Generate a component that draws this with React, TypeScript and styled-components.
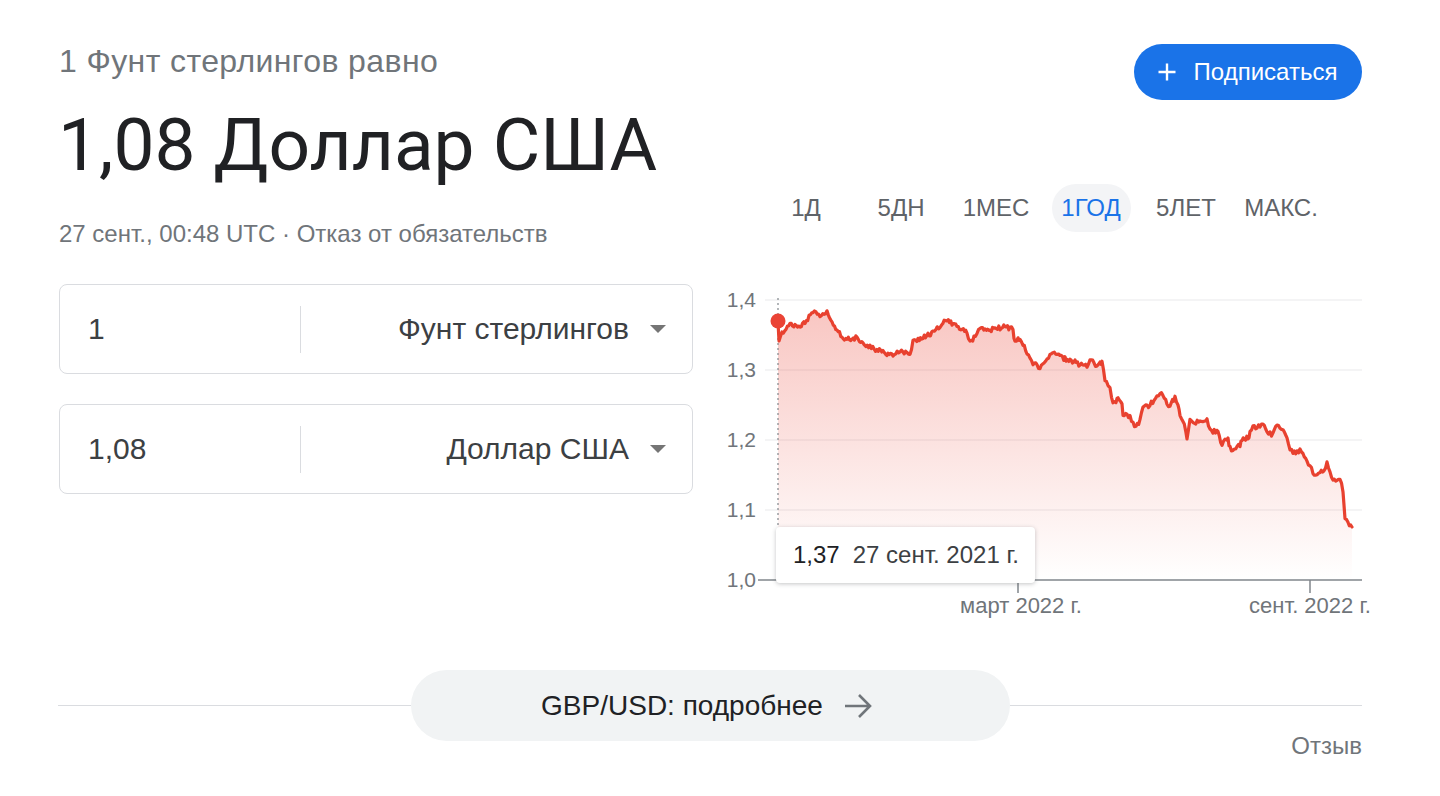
import React from "react";
import styled, { createGlobalStyle } from "styled-components";

const GlobalStyle = createGlobalStyle`
  html, body { margin: 0; padding: 0; background: #ffffff; }
  body { font-family: "Liberation Sans", Arial, sans-serif; color: #202124; }
  * { box-sizing: border-box; }
`;

const Page = styled.div`
  width: 1440px;
  height: 796px;
  padding: 44px 78px 0 58px;
  display: flex;
  flex-direction: column;
  overflow: hidden;
`;

const Top = styled.div`
  display: grid;
  grid-template-columns: 635px 647px;
  column-gap: 22px;
`;

const LeftCol = styled.div`
  display: flex;
  flex-direction: column;
`;

const RightCol = styled.div`
  display: flex;
  flex-direction: column;
`;

const Label = styled.div`
  font-size: 32px;
  line-height: 34px;
  letter-spacing: 0.4px;
  color: #70757a;
  padding-left: 1px;
  white-space: nowrap;
`;

const Title = styled.div`
  margin-top: 24px;
  font-family: Roboto, "Liberation Sans", sans-serif;
  font-size: 73px;
  line-height: 86px;
  color: #202124;
  white-space: nowrap;
`;

const Meta = styled.div`
  margin-top: 32px;
  font-size: 24px;
  line-height: 28px;
  color: #70757a;
  padding-left: 1px;
  white-space: nowrap;
`;

const Boxes = styled.div`
  margin-top: 36px;
  display: flex;
  flex-direction: column;
  gap: 30px;
`;

const Box = styled.div`
  height: 90px;
  border: 1px solid #dadce0;
  border-radius: 8px;
  display: flex;
  align-items: center;
  margin-left: 1px;
`;

const Amount = styled.div`
  width: 240px;
  padding-left: 28px;
  font-size: 30px;
  color: #3c4043;
`;

const Divider = styled.div`
  width: 1px;
  height: 47px;
  background: #dadce0;
`;

const CurrencySelect = styled.div`
  flex: 1;
  display: flex;
  justify-content: flex-end;
  align-items: center;
  gap: 21px;
  padding-right: 26px;
  font-size: 30px;
  color: #3c4043;
  white-space: nowrap;
`;

const Caret = styled.span`
  width: 0;
  height: 0;
  border-left: 8px solid transparent;
  border-right: 8px solid transparent;
  border-top: 8px solid #757575;
`;

const ButtonRow = styled.div`
  display: flex;
  justify-content: flex-end;
`;

const SubscribeButton = styled.button`
  width: 228px;
  height: 56px;
  border: none;
  border-radius: 28px;
  background: #1a73e8;
  color: #ffffff;
  font-family: "Liberation Sans", Arial, sans-serif;
  font-size: 24px;
  display: flex;
  align-items: center;
  justify-content: center;
  gap: 17px;
  padding: 0 2px 0 0;
  cursor: pointer;
`;

const Tabs = styled.div`
  margin-top: 84px;
  display: flex;
  justify-content: center;
  gap: 16px;
  padding-left: 10px;
`;

const Tab = styled.div<{ $active?: boolean }>`
  width: 79px;
  height: 48px;
  border-radius: 24px;
  display: flex;
  align-items: center;
  justify-content: center;
  font-size: 24px;
  color: ${(p) => (p.$active ? "#1a73e8" : "#5f6368")};
  background: ${(p) => (p.$active ? "#f3f4f6" : "transparent")};
  white-space: nowrap;
`;

const ChartWrap = styled.div`
  margin-top: 53px;
  height: 340px;
  position: relative;
`;

const ChartSvg = styled.svg`
  display: block;
  overflow: visible;
`;

const Tooltip = styled.div`
  position: absolute;
  left: 61px;
  top: 242px;
  height: 56px;
  padding: 0 16px 0 17px;
  background: #ffffff;
  border-radius: 4px;
  box-shadow: 0 1px 4px rgba(60, 64, 67, 0.3);
  display: flex;
  align-items: center;
  gap: 13px;
  font-size: 24px;
  white-space: nowrap;
`;

const TipValue = styled.span`
  color: #202124;
`;

const TipDate = styled.span`
  color: #3c4043;
`;

const Bottom = styled.div`
  margin-top: 45px;
  display: flex;
  align-items: center;
`;

const Rule = styled.div`
  flex: 1;
  height: 1px;
  background: #dadce0;
`;

const MoreButton = styled.div`
  width: 599px;
  height: 71px;
  border-radius: 36px;
  background: #f1f3f4;
  display: flex;
  align-items: center;
  justify-content: center;
  gap: 20px;
  font-size: 28px;
  color: #202124;
  padding-right: 6px;
  white-space: nowrap;
`;

const Feedback = styled.div`
  margin-top: -9px;
  align-self: flex-end;
  font-size: 24px;
  line-height: 28px;
  color: #70757a;
`;

const keys: [number, number][] = [
  [778, 322], [779, 341], [782, 333], [790, 325], [800, 328], [805, 322], [813, 312], [820, 316],
  [827, 313], [832, 322], [837, 330], [842, 336], [847, 340], [852, 338], [857, 338], [863, 343],
  [870, 347], [877, 350], [883, 352], [888, 354], [893, 355], [900, 352], [907, 353], [910, 355],
  [913, 342], [918, 340], [923, 338], [928, 335], [933, 332], [940, 326], [947, 320], [952, 323],
  [957, 327], [962, 330], [967, 333], [970, 342], [974, 338], [977, 333], [980, 328], [985, 330],
  [990, 330], [995, 329], [1000, 328], [1005, 327], [1010, 328], [1013, 330], [1015, 343], [1018, 338],
  [1020, 340], [1023, 345], [1027, 352], [1030, 357], [1033, 363], [1037, 366], [1040, 368], [1044, 362],
  [1047, 358], [1050, 355], [1053, 353], [1057, 355], [1060, 357], [1065, 359], [1070, 360], [1075, 362],
  [1080, 365], [1087, 367], [1090, 358], [1094, 364], [1097, 365], [1100, 363], [1102, 363], [1105, 380],
  [1108, 384], [1110, 387], [1113, 405], [1116, 402], [1118, 398], [1121, 400], [1122, 405], [1123, 415],
  [1127, 416], [1130, 417], [1133, 422], [1136, 427], [1140, 420], [1143, 407], [1147, 406], [1150, 405],
  [1154, 400], [1157, 397], [1160, 395], [1163, 395], [1167, 405], [1170, 405], [1175, 397], [1178, 405],
  [1180, 417], [1183, 420], [1187, 438], [1190, 417], [1193, 423], [1200, 422], [1207, 420], [1210, 428],
  [1213, 432], [1218, 430], [1222, 447], [1225, 437], [1228, 440], [1230, 447], [1233, 452], [1237, 448],
  [1240, 445], [1242, 440], [1248, 438], [1250, 433], [1253, 428], [1257, 426], [1260, 425], [1263, 423],
  [1267, 433], [1270, 434], [1273, 435], [1277, 425], [1280, 427], [1283, 430], [1287, 440], [1290, 450],
  [1293, 452], [1297, 453], [1300, 450], [1303, 455], [1307, 460], [1310, 466], [1313, 473], [1317, 477],
  [1320, 473], [1324, 470], [1327, 463], [1330, 472], [1333, 480], [1337, 479], [1340, 478], [1343, 490],
  [1345, 518], [1348, 522], [1352, 527],
];

function mulberry32(a: number) {
  return function () {
    a |= 0;
    a = (a + 0x6d2b79f5) | 0;
    let t = Math.imul(a ^ (a >>> 15), 1 | a);
    t = (t + Math.imul(t ^ (t >>> 7), 61 | t)) ^ t;
    return ((t ^ (t >>> 14)) >>> 0) / 4294967296;
  };
}

function buildPoints(): [number, number][] {
  const rnd = mulberry32(20210927);
  const pts: [number, number][] = [keys[0]];
  for (let i = 1; i < keys.length; i++) {
    const [x0, y0] = keys[i - 1];
    const [x1, y1] = keys[i];
    const steps = Math.max(1, Math.round((x1 - x0) / 1.3));
    for (let s = 1; s <= steps; s++) {
      const t = s / steps;
      const x = x0 + (x1 - x0) * t;
      let y = y0 + (y1 - y0) * t;
      if (!(i === keys.length - 1 && s === steps) && i > 1) {
        y += (rnd() - 0.5) * 4.6;
      }
      pts.push([x, y]);
    }
  }
  return pts;
}

const points = buildPoints();
const linePath = points.map((p, i) => `${i === 0 ? "M" : "L"}${p[0].toFixed(1)},${p[1].toFixed(1)}`).join(" ");
const areaPath = `${linePath} L${points[points.length - 1][0]},580 L778,580 Z`;

const yLabels = [
  { v: "1,4", y: 300 },
  { v: "1,3", y: 370 },
  { v: "1,2", y: 440 },
  { v: "1,1", y: 510 },
  { v: "1,0", y: 580 },
];

const PlusIcon = () => (
  <svg width="20" height="20" viewBox="0 0 20 20" aria-hidden="true">
    <path d="M10 1.5v17M1.5 10h17" stroke="#ffffff" strokeWidth="2.4" fill="none" />
  </svg>
);

const ArrowIcon = () => (
  <svg width="30" height="26" viewBox="0 0 30 26" aria-hidden="true">
    <path d="M2 13h25M16 2l11 11-11 11" stroke="#70757a" strokeWidth="2.6" fill="none" strokeLinejoin="miter" />
  </svg>
);

const chartFont = '"Liberation Sans", Arial, sans-serif';

const PriceChart = () => (
  <ChartSvg width={647} height={340} viewBox="715 285 647 340">
    <defs>
      <linearGradient id="areaFill" gradientUnits="userSpaceOnUse" x1="0" y1="310" x2="0" y2="580">
        <stop offset="0" stopColor="#ea4335" stopOpacity="0.3" />
        <stop offset="1" stopColor="#ea4335" stopOpacity="0" />
      </linearGradient>
    </defs>
    {yLabels.slice(0, 4).map((l) => (
      <line key={l.v} x1={765} x2={1362} y1={l.y} y2={l.y} stroke="#f0f1f2" strokeWidth={1.5} />
    ))}
    {yLabels.map((l) => (
      <text key={`t${l.v}`} x={756} y={l.y + 7} textAnchor="end" fontSize={21} fill="#70757a" fontFamily={chartFont}>
        {l.v}
      </text>
    ))}
    <path d={areaPath} fill="url(#areaFill)" />
    <line x1={758} x2={1362} y1={580} y2={580} stroke="#80868b" strokeWidth={1.5} />
    <line x1={1018} x2={1018} y1={580} y2={593} stroke="#80868b" strokeWidth={1.5} />
    <line x1={1310} x2={1310} y1={580} y2={593} stroke="#80868b" strokeWidth={1.5} />
    <text x={1021} y={613} textAnchor="middle" fontSize={22} fill="#70757a" fontFamily={chartFont}>
      март 2022 г.
    </text>
    <text x={1310} y={613} textAnchor="middle" fontSize={22} fill="#70757a" fontFamily={chartFont}>
      сент. 2022 г.
    </text>
    <line x1={778} x2={778} y1={298} y2={528} stroke="#80868b" strokeWidth={1.2} strokeDasharray="2 3" />
    <path d={linePath} fill="none" stroke="#e8412f" strokeWidth={3.2} strokeLinejoin="round" strokeLinecap="round" />
    <circle cx={778} cy={321} r={7.5} fill="#ea4335" />
  </ChartSvg>
);

const tabs = ["1Д", "5ДН", "1МЕС", "1ГОД", "5ЛЕТ", "МАКС."];

export default function App() {
  return (
    <>
      <GlobalStyle />
      <Page>
        <Top>
          <LeftCol>
            <Label>1 Фунт стерлингов равно</Label>
            <Title>1,08 Доллар США</Title>
            <Meta>27 сент., 00:48 UTC · Отказ от обязательств</Meta>
            <Boxes>
              <Box>
                <Amount>1</Amount>
                <Divider />
                <CurrencySelect>
                  Фунт стерлингов
                  <Caret />
                </CurrencySelect>
              </Box>
              <Box>
                <Amount>1,08</Amount>
                <Divider />
                <CurrencySelect>
                  Доллар США
                  <Caret />
                </CurrencySelect>
              </Box>
            </Boxes>
          </LeftCol>
          <RightCol>
            <ButtonRow>
              <SubscribeButton>
                <PlusIcon />
                Подписаться
              </SubscribeButton>
            </ButtonRow>
            <Tabs>
              {tabs.map((t) => (
                <Tab key={t} $active={t === "1ГОД"}>{t}</Tab>
              ))}
            </Tabs>
            <ChartWrap>
              <PriceChart />
              <Tooltip>
                <TipValue>1,37</TipValue>
                <TipDate>27 сент. 2021 г.</TipDate>
              </Tooltip>
            </ChartWrap>
          </RightCol>
        </Top>
        <Bottom>
          <Rule />
          <MoreButton>
            GBP/USD: подробнее
            <ArrowIcon />
          </MoreButton>
          <Rule />
        </Bottom>
        <Feedback>Отзыв</Feedback>
      </Page>
    </>
  );
}
